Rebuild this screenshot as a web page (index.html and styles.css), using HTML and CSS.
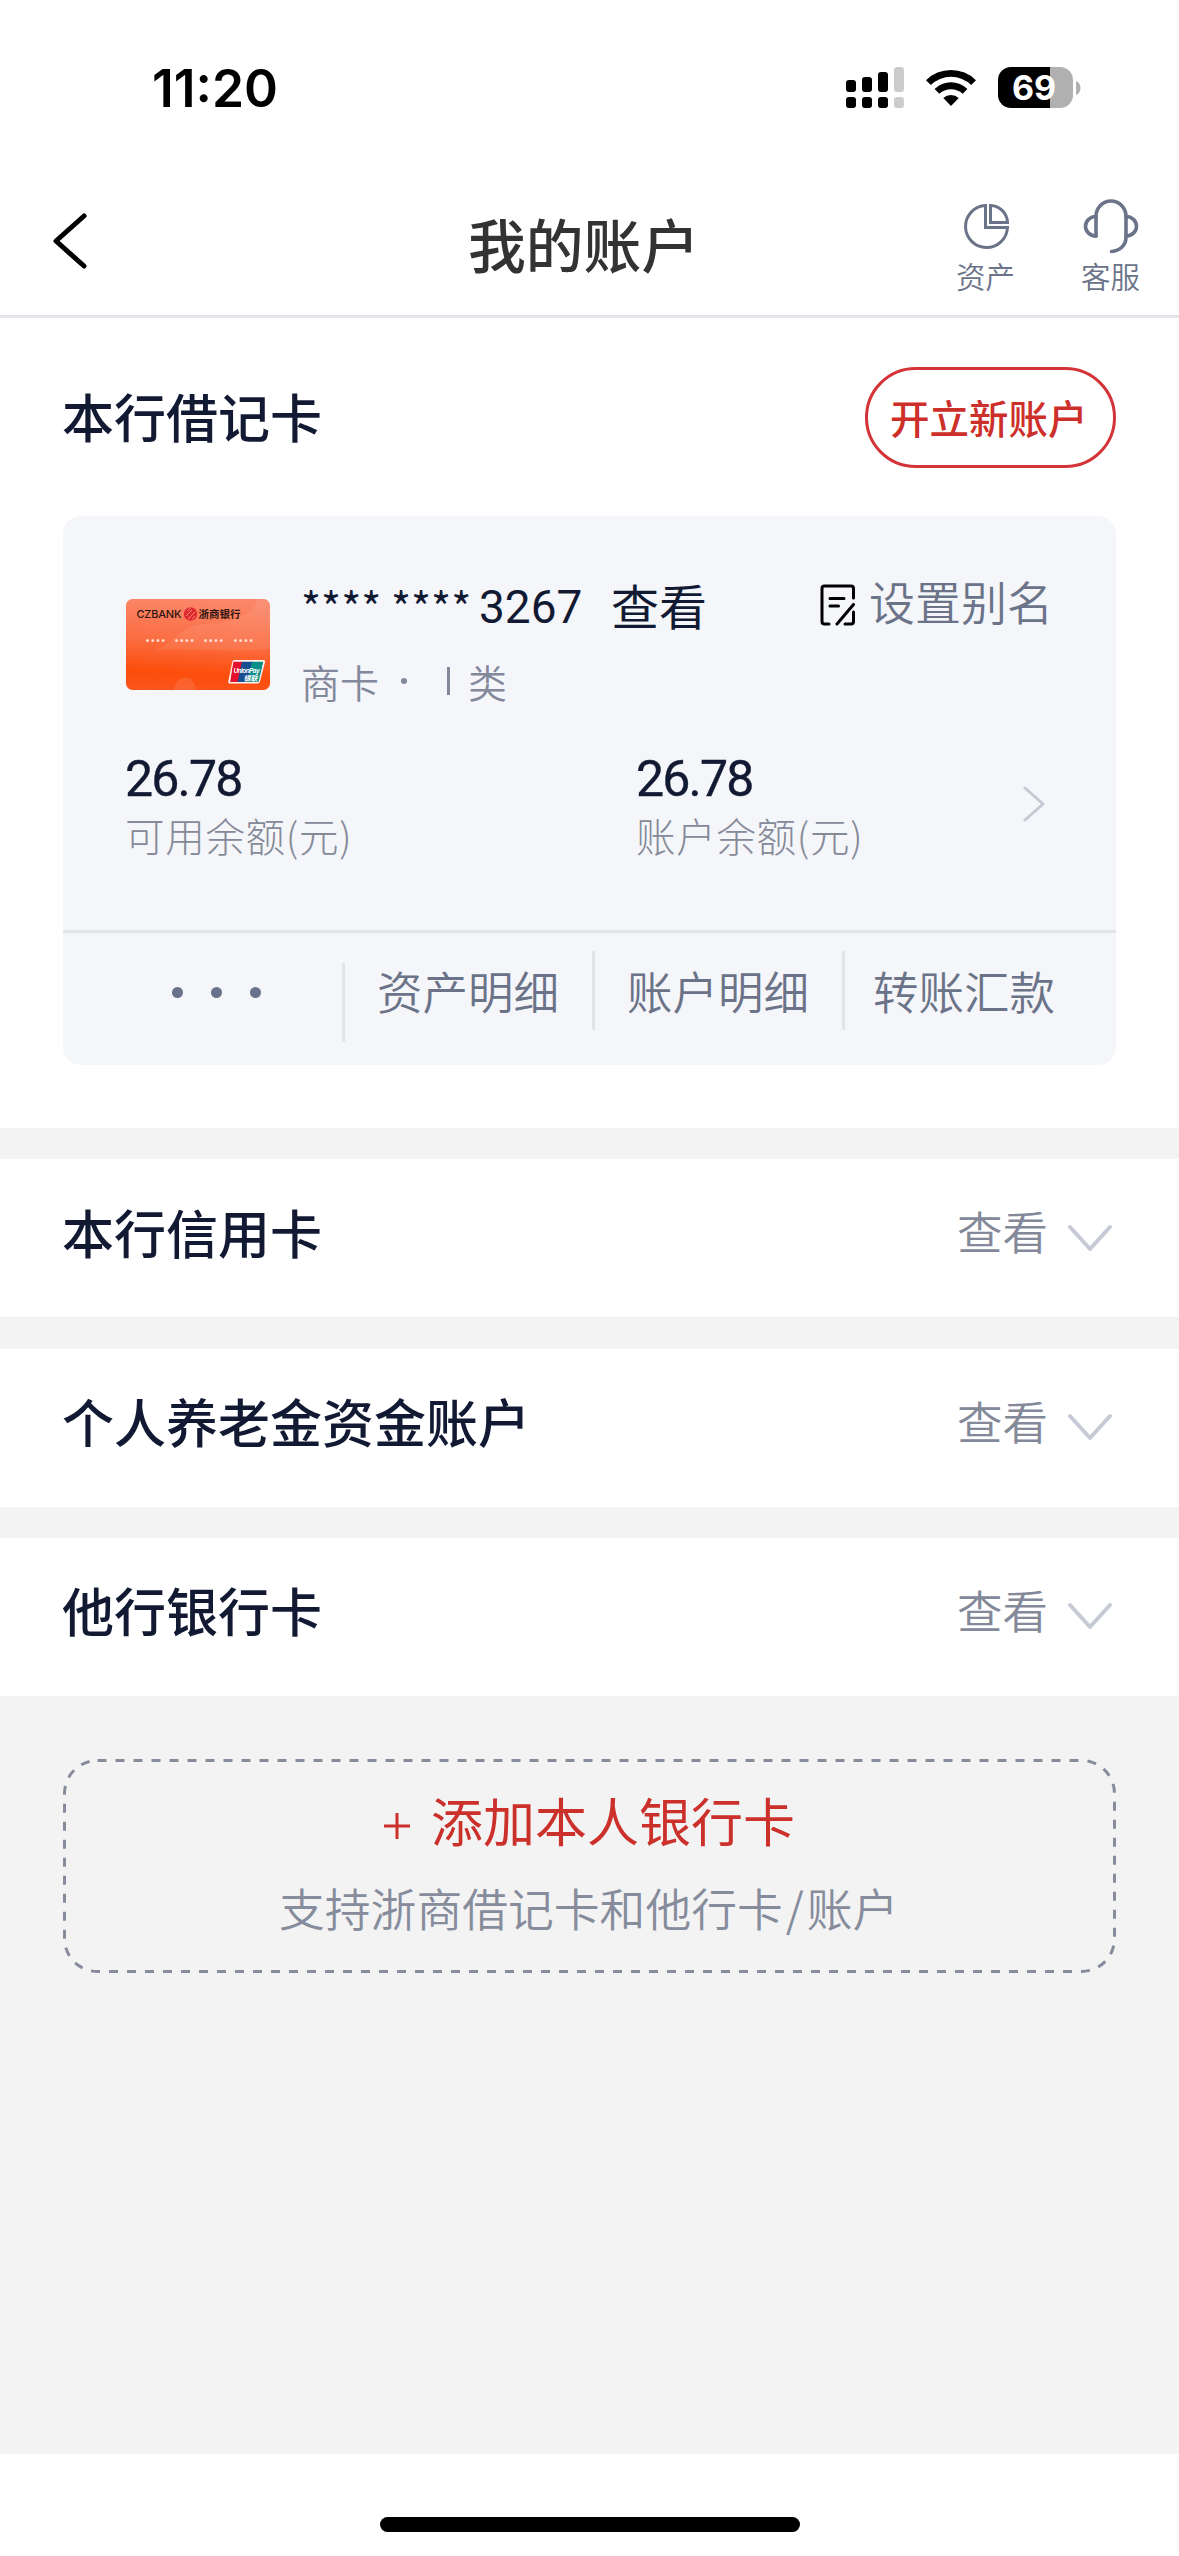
FILE: index.html
```html
<!DOCTYPE html>
<html lang="zh-CN">
<head>
<meta charset="utf-8">
<title>我的账户</title>
<link rel="stylesheet" href="styles.css">
</head>
<body>
<div class="screen">
  <div class="status">
    <span class="time">11:20</span>
    <div class="status-icons">
      <svg class="signal" width="58" height="41" viewBox="0 0 58 41">
        <g fill="#000"><rect x="0" y="13" width="10" height="12" rx="3"/><rect x="16" y="10" width="10" height="15" rx="3"/><rect x="32" y="5" width="10" height="20" rx="3"/><rect x="0" y="30" width="10" height="11" rx="3"/><rect x="16" y="30" width="10" height="11" rx="3"/><rect x="32" y="30" width="10" height="11" rx="3"/></g>
        <g fill="#ccc"><rect x="48" y="0" width="10" height="25" rx="3"/><rect x="48" y="30" width="10" height="11" rx="3"/></g>
      </svg>
      <svg class="wifi" width="50" height="37" viewBox="0 0 50 37">
        <path d="M0 11.200A35.500 35.500 0 0 1 50 11.200L45.200 16A29 29 0 0 0 4.800 16Z"/>
        <path d="M8.600 20A23.500 23.500 0 0 1 41.400 20L36.700 24.800A17 17 0 0 0 13.300 24.800Z"/>
        <path d="M17.300 28.900A11.500 11.500 0 0 1 32.700 28.900L25 37Z"/>
      </svg>
      <div class="battery"><div class="cell">69</div><svg width="5" height="14" viewBox="0 0 5 14"><path d="M0 0C6 2 6 12 0 14Z" fill="#b0b0b0"/></svg></div>
    </div>
  </div>
  <header class="nav">
    <svg class="back" width="36" height="58" viewBox="0 0 36 58"><path d="M32 4L4 29L32 54" fill="none" stroke="#000" stroke-width="5" stroke-linecap="round" stroke-linejoin="round"/></svg>
    <h1>我的账户</h1>
    <div class="nav-tools">
      <div class="tool"><svg width="60" height="60" viewBox="0 0 60 60" fill="none" stroke="#6b7388" stroke-width="3"><path d="M29.500 10.500A21 21 0 1 0 51.500 32.500H29.500Z"/><path d="M34.500 10.500A17.500 17.500 0 0 1 51.500 27.500H34.500Z"/></svg><span>资产</span></div>
      <div class="tool"><svg width="60" height="60" viewBox="0 0 60 60" fill="none" stroke="#6b7388" stroke-width="3.600" stroke-linecap="round"><path d="M15 41V21.500A15 15.500 0 0 1 45 21.500V42A15 14 0 0 1 30.500 56.500"/><path d="M15 21.500A10.500 9.750 0 0 0 15 41M45 21.500A10.500 9.750 0 0 1 45 41"/></svg><span>客服</span></div>
    </div>
  </header>

  <section class="debit">
    <div class="debit-head"><h2>本行借记卡</h2><button class="open-btn">开立新账户</button></div>
    <div class="account">
      <div class="account-top">
        <svg class="bankcard" width="144" height="91" viewBox="0 0 144 91">
          <defs><linearGradient id="cardfill" x1="0.300" y1="0" x2="0.200" y2="1"><stop offset="0" stop-color="#fb8668"/><stop offset="0.450" stop-color="#fb6d42"/><stop offset="0.800" stop-color="#fc4d0b"/><stop offset="1" stop-color="#fc551d"/></linearGradient>
          <clipPath id="paybox"><path d="M107 62.500h30.500l-5 25.500h-29Z"/></clipPath></defs>
          <rect width="144" height="91" rx="6.500" fill="url(#cardfill)"/>
          <path d="M24 52C48 48 50 28 78 25C108 24 128 16 132 0H137.500Q144 0 144 6.500V50C100 54 60 48 24 52Z" fill="#fff" opacity="0.080"/>
          <path d="M48 91C50 74 68 74 70 91Z" fill="#fff" opacity="0.100"/>
          <text class="card-latin" x="10.500" y="19" textLength="45">CZBANK</text>
          <circle cx="64.500" cy="15" r="6.700" fill="#df2a32"/>
          <path d="M60 17l6-6M62 20l7-7M61.500 12l3-3M66 20l3-3" stroke="#f98a70" stroke-width="1"/>
          <text class="card-cjk" x="72.500" y="18.600" textLength="42">浙商银行</text>
          <g stroke="#ffd9cc" stroke-width="3" stroke-linecap="round" stroke-dasharray="0 5.200"><path d="M21.500 41.500h16M50.500 41.500h16M79.500 41.500h16M109.500 41.500h16"/></g>
          <path d="M107.500 61h30q2 0 1.500 2l-5 19.500q-.5 2-2.500 2h-27.500q-2.200 0-1.700-2l4-19.500q.4-2 2.200-2Z" fill="#fff3ef"/>
          <g clip-path="url(#paybox)"><path d="M107.500 62.500h9l-4 20.500h-9Z" fill="#e60f2d"/><path d="M116 62.500h11l-4.500 20.500h-11Z" fill="#174f91"/><path d="M126 62.500h11.500l-5 20.500h-11Z" fill="#0a8f88"/></g>
          <text class="pay-latin" x="107.500" y="74" textLength="26">UnionPay</text>
          <text class="pay-cjk" x="117.500" y="81.500" textLength="14">银联</text>
        </svg>
        <div class="account-id">
          <div class="number"><span class="stars">**** ****</span><span class="tail">3267</span><span class="show">查看</span></div>
          <div class="kind"><span>商卡</span><i class="kind-dot"></i><i class="kind-bar"></i><span>类</span></div>
        </div>
        <div class="alias">
          <svg width="36" height="42" viewBox="0 0 36 42" fill="none" stroke="#000" stroke-width="3" stroke-linecap="round" stroke-linejoin="round"><path d="M9 40H4.500Q2 40 2 37.500V4.500Q2 2 4.500 2H31Q33.500 2 33.500 4.500V14M33.500 28V37.500Q33.500 40 31 40H25M33.500 20.500L17 40M10 14.500H24M10 22H18.500"/></svg>
          <span>设置别名</span>
        </div>
      </div>
      <div class="balances">
        <div class="balance"><b>26.78</b><span>可用余额(元)</span></div>
        <div class="balance"><b>26.78</b><span>账户余额(元)</span></div>
        <svg class="go" width="24" height="36" viewBox="0 0 24 36"><path d="M2 2L20 18L2 34" fill="none" stroke="#c4c9d2" stroke-width="3" stroke-linecap="round" stroke-linejoin="round"/></svg>
      </div>
      <div class="actions">
        <div class="more"><i></i><i></i><i></i></div>
        <div class="action">资产明细</div>
        <div class="action">账户明细</div>
        <div class="action last">转账汇款</div>
      </div>
    </div>
  </section>

  <section class="row"><h2>本行信用卡</h2><span>查看</span><svg class="down" width="46" height="30" viewBox="0 0 46 30"><path d="M3 3L23 25L43 3"/></svg></section>
  <section class="row"><h2>个人养老金资金账户</h2><span>查看</span><svg class="down" width="46" height="30" viewBox="0 0 46 30"><path d="M3 3L23 25L43 3"/></svg></section>
  <section class="row"><h2>他行银行卡</h2><span>查看</span><svg class="down" width="46" height="30" viewBox="0 0 46 30"><path d="M3 3L23 25L43 3"/></svg></section>

  <div class="add">
    <svg class="dash" width="1053" height="214" viewBox="0 0 1053 214"><rect x="1.500" y="1.500" width="1050" height="211" rx="33" fill="none" stroke="#878c9c" stroke-width="3" stroke-dasharray="9 9"/></svg>
    <div class="add-main"><svg width="28" height="28" viewBox="0 0 28 28"><path d="M1 14H27M14 1V27" stroke="#cb302a" stroke-width="3"/></svg><span>添加本人银行卡</span></div>
    <div class="add-sub">支持浙商借记卡和他行卡<span class="slash">/</span>账户</div>
  </div>
  <footer class="home"><div class="home-bar"></div></footer>
</div>
</body>
</html>
```
FILE: styles.css
```css
* { box-sizing: border-box; }
body { margin: 0; background: #fff; font-family: "Noto Sans CJK SC", sans-serif; color: #121a33; }
h1, h2 { margin: 0; font-weight: 500; }
svg { display: block; flex: none; }
.screen { width: 1179px; height: 2556px; background: #f3f3f3; display: flex; flex-direction: column; overflow: hidden; }

.status { height: 176px; background: #fff; display: flex; justify-content: space-between; padding: 67px 98px 0 152px; }
.time { font: 600 51.500px/42px Inter, sans-serif; color: #000; }
.status-icons { display: flex; height: 41px; align-items: center; }
.wifi { margin: 0 22px; }
.battery { display: flex; align-items: center; gap: 3px; }
.cell { width: 75px; height: 41px; border-radius: 13px; background: linear-gradient(90deg, #000 52px, #b0b0b0 52px); color: #fff; font: 700 34px/41px Inter, sans-serif; text-align: center; padding-right: 3px; }

.nav { height: 142px; background: #fff; border-bottom: 3px solid #e4e4ea; display: grid; grid-template-columns: 468px 245px 1fr; }
.back { margin: 36px 0 0 52px; }
.nav h1 { font-size: 57.800px; line-height: 80px; color: #333; padding-top: 27px; white-space: nowrap; }
.nav-tools { display: flex; justify-content: flex-end; gap: 65px; padding: 19px 38px 0 0; }
.tool { width: 60px; color: #6b7388; font-size: 29.500px; line-height: 40px; font-weight: 350; }
.tool span { display: block; }

.debit { height: 810px; background: #fff; padding: 49px 63px 0; flex: none; }
.debit-head { display: flex; justify-content: space-between; height: 149px; }
h2 { font-size: 52px; line-height: 97px; font-weight: 500; margin-left: -1px; }
.open-btn { width: 251px; height: 101px; border: 3px solid #d43338; border-radius: 51px; background: #fff; color: #cd2f2a; font: 500 39.500px/93px "Noto Sans CJK SC", sans-serif; padding: 0 0 2px 22px; text-align: left; white-space: nowrap; }
.account { height: 549px; border-radius: 18px; background: #f5f6fa; }
.account-top { height: 210px; padding: 62px 63px 0; display: flex; }
.bankcard { margin-top: 21px; }
.card-latin { font: 500 11px Inter, sans-serif; fill: #2e1512; }
.card-cjk { font: 700 10.500px "Noto Sans CJK SC", sans-serif; fill: #2e1512; }
.pay-latin { font: italic 700 6.500px "Liberation Sans", sans-serif; fill: #fff; }
.pay-cjk { font: italic 700 7px "Noto Sans CJK SC", sans-serif; fill: #fff; }
.account-id { width: 552px; padding-left: 31px; }
.number { display: flex; height: 56px; line-height: 54px; }
.stars { font-size: 43px; width: 178px; white-space: nowrap; }
.tail { font: 400 46px/58px Roboto, sans-serif; width: 132px; }
.show { font-size: 48px; line-height: 52px; }
.kind { display: flex; align-items: center; height: 50px; margin-top: 22px; font-size: 39px; line-height: 50px; font-weight: 350; color: #83899b; }
.kind-dot { width: 6px; height: 6px; border-radius: 3px; background: #83899b; margin: 0 40px 0 22px; }
.kind-bar { width: 3px; height: 28px; background: #83899b; margin-right: 18px; }
.alias { display: flex; gap: 13px; font-size: 46px; line-height: 44px; color: #6b7388; font-weight: 350; margin-left: -2px; }
.alias svg { margin-top: 6px; }
.alias span { white-space: nowrap; }
.balances { height: 204px; display: flex; padding: 0 0 0 62px; }
.balance { width: 511px; padding-top: 24px; }
.balance + .balance { width: 387px; }
.balance b { display: block; font: 400 50px/58px Roboto, sans-serif; letter-spacing: -1.800px; -webkit-text-stroke: 0.400px #121a33; }
.balance span { display: block; font-size: 39.500px; line-height: 56px; margin-top: -1px; font-weight: 300; color: #858a99; letter-spacing: 0.700px; }
.go { margin-top: 60px; }
.actions { height: 135px; border-top: 3px solid #e2e4e8; display: flex; }
.more { width: 282px; height: 79px; margin-top: 30px; border-right: 3px solid #e2e4e8; display: flex; gap: 28px; padding: 24px 0 0 109px; }
.more i { width: 11px; height: 11px; border-radius: 50%; background: #69728a; }
.action { width: 250px; height: 79px; margin-top: 18px; border-right: 3px solid #e2e4e8; font-size: 45.500px; line-height: 78px; color: #6b7388; font-weight: 350; padding-left: 32px; white-space: nowrap; }
.action.last { border: 0; padding-left: 28px; }

.row { height: 158px; margin-top: 31.333px; background: #fff; padding: 0 66px 0 63px; display: flex; align-items: center; flex: none; }
.row h2 { flex: 1; line-height: 76px; margin-top: -13px; }
.row span { font-size: 45.500px; line-height: 60px; font-weight: 350; color: #838999; margin: -16px 19px 0 0; }
.down { fill: none; stroke: #c6cad4; stroke-width: 4px; stroke-linecap: round; stroke-linejoin: round; margin-top: 1px; }

.add { position: relative; width: 1053px; height: 214px; margin: 63px 63px 0; flex: none; }
.dash { position: absolute; inset: 0; }
.add-main { display: flex; justify-content: flex-start; align-items: center; gap: 20px; font-size: 52px; line-height: 76px; color: #cb302a; padding: 23px 0 0 320px; }
.add-main span { font-weight: 400; }
.add-main svg { margin-top: 12px; }
.add-sub { font-size: 45.800px; line-height: 64px; margin-top: 17px; font-weight: 350; color: #878c9c; padding-left: 216px; white-space: nowrap; }
.slash { margin: 0 3px; }
.home { margin-top: auto; height: 102px; background: #fff; flex: none; padding-top: 63px; }
.home-bar { width: 420px; height: 15px; margin: 0 auto; border-radius: 8px; background: #000; }
```
